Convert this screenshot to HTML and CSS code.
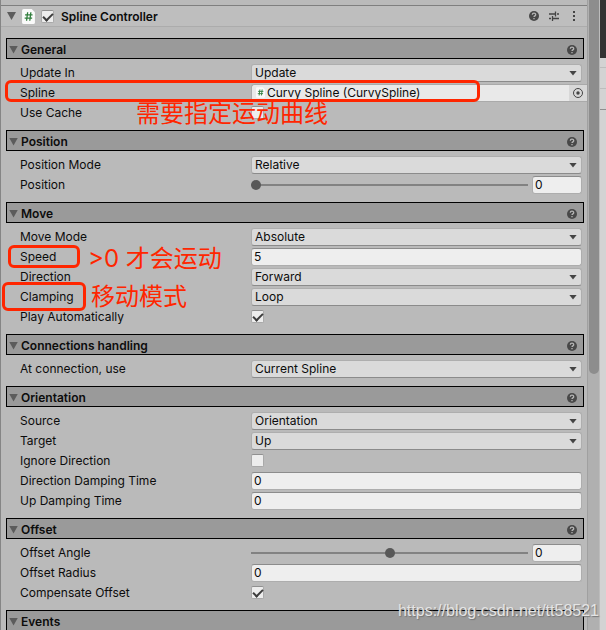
FILE: index.html
```html
<!DOCTYPE html>
<html lang="en">
<head>
<meta charset="utf-8">
<title>Spline Controller</title>
<link rel="stylesheet" href="styles.css">
</head>
<body>
<svg class="defs" aria-hidden="true">
  <symbol id="help" viewBox="0 0 12 12">
    <circle cx="6" cy="6" r="5" fill="#484848"/>
    <path d="M4.3 4.8C4.3 2.7 7.7 2.7 7.7 4.7C7.7 5.9 6 5.8 6 7.1M6 8V9.2" fill="none" stroke="#b4b4b4" stroke-width="1.3"/>
  </symbol>
  <symbol id="script" viewBox="0 0 12 14">
    <path d="M1.500 0H9L12 3V12.500Q12 14 10.500 14H1.500Q0 14 0 12.500V1.500Q0 0 1.500 0Z" fill="#fafafa"/>
    <path d="M5.200 3L4.200 11M8.200 3L7.200 11M2.800 5.500H9.800M2.400 8.500H9.400" stroke="#2f7d3b" stroke-width="1.200" fill="none"/>
  </symbol>
</svg>
<div class="window">
  <main class="inspector">
    <header class="component">
      <button class="fold" aria-label="Collapse component"></button>
      <svg class="script-icon"><use href="#script"/></svg>
      <input class="check" type="checkbox" id="enabled" checked>
      <label class="component-name" for="enabled">Spline Controller</label>
      <button class="icon-button" aria-label="Help"><svg><use href="#help"/></svg></button>
      <button class="icon-button" aria-label="Presets"><svg viewBox="0 0 12 12"><path d="M1 4H7M9 4H11M1 8.500H3M5 8.500H11M7.500 1.500V6.500M4.500 6V11" fill="none" stroke="#444" stroke-width="1.300"/></svg></button>
      <button class="icon-button" aria-label="More"><svg viewBox="0 0 12 12"><path d="M5 1H7V3H5ZM5 5H7V7H5ZM5 9H7V11H5Z" fill="#444"/></svg></button>
    </header>

    <section class="group">
      <h2 class="bar"><button class="fold" aria-label="Collapse General"></button>General<button class="icon-button" aria-label="Help on General"><svg><use href="#help"/></svg></button></h2>
      <div class="row"><label for="update">Update In</label><span class="drop"><select id="update"><option>Update</option></select></span></div>
      <div class="row"><label for="spline">Spline</label><span class="object"><svg class="object-icon"><use href="#script"/></svg><input id="spline" type="text" value="Curvy Spline (CurvySpline)" readonly><button class="picker" aria-label="Select spline"><svg viewBox="0 0 12 12"><circle cx="6" cy="6" r="4.500" fill="none" stroke="#444"/><circle cx="6" cy="6" r="1.700" fill="#444"/></svg></button></span></div>
      <div class="row"><label for="cache">Use Cache</label><input class="check" type="checkbox" id="cache"></div>
    </section>

    <section class="group">
      <h2 class="bar"><button class="fold" aria-label="Collapse Position"></button>Position<button class="icon-button" aria-label="Help on Position"><svg><use href="#help"/></svg></button></h2>
      <div class="row"><label for="pmode">Position Mode</label><span class="drop"><select id="pmode"><option>Relative</option></select></span></div>
      <div class="row"><label for="pos">Position</label><span class="slide"><input id="pos" type="range" min="0" max="1" step="0.01" value="0"><input class="field" type="text" value="0" aria-label="Position value"></span></div>
    </section>

    <section class="group">
      <h2 class="bar"><button class="fold" aria-label="Collapse Move"></button>Move<button class="icon-button" aria-label="Help on Move"><svg><use href="#help"/></svg></button></h2>
      <div class="row"><label for="mmode">Move Mode</label><span class="drop"><select id="mmode"><option>Absolute</option></select></span></div>
      <div class="row"><label for="speed">Speed</label><input class="field" id="speed" type="text" value="5"></div>
      <div class="row"><label for="dir">Direction</label><span class="drop"><select id="dir"><option>Forward</option></select></span></div>
      <div class="row"><label for="clamp">Clamping</label><span class="drop"><select id="clamp"><option>Loop</option></select></span></div>
      <div class="row"><label for="play">Play Automatically</label><input class="check" type="checkbox" id="play" checked></div>
    </section>

    <section class="group">
      <h2 class="bar"><button class="fold" aria-label="Collapse Connections handling"></button>Connections handling<button class="icon-button" aria-label="Help on Connections handling"><svg><use href="#help"/></svg></button></h2>
      <div class="row"><label for="conn">At connection, use</label><span class="drop"><select id="conn"><option>Current Spline</option></select></span></div>
    </section>

    <section class="group">
      <h2 class="bar"><button class="fold" aria-label="Collapse Orientation"></button>Orientation<button class="icon-button" aria-label="Help on Orientation"><svg><use href="#help"/></svg></button></h2>
      <div class="row"><label for="source">Source</label><span class="drop"><select id="source"><option>Orientation</option></select></span></div>
      <div class="row"><label for="target">Target</label><span class="drop"><select id="target"><option>Up</option></select></span></div>
      <div class="row"><label for="ignore">Ignore Direction</label><input class="check" type="checkbox" id="ignore"></div>
      <div class="row"><label for="ddamp">Direction Damping Time</label><input class="field" id="ddamp" type="text" value="0"></div>
      <div class="row"><label for="udamp">Up Damping Time</label><input class="field" id="udamp" type="text" value="0"></div>
    </section>

    <section class="group">
      <h2 class="bar"><button class="fold" aria-label="Collapse Offset"></button>Offset<button class="icon-button" aria-label="Help on Offset"><svg><use href="#help"/></svg></button></h2>
      <div class="row"><label for="angle">Offset Angle</label><span class="slide"><input id="angle" type="range" min="-180" max="180" value="0"><input class="field" type="text" value="0" aria-label="Offset angle value"></span></div>
      <div class="row"><label for="radius">Offset Radius</label><input class="field" id="radius" type="text" value="0"></div>
      <div class="row"><label for="comp">Compensate Offset</label><input class="check" type="checkbox" id="comp" checked></div>
    </section>

    <section class="group">
      <h2 class="bar"><button class="fold" aria-label="Collapse Events"></button>Events</h2>
    </section>
  </main>
  <div class="scrollbar"><div class="thumb"></div></div>
  <div class="side"><div class="side-dark"></div><div class="side-line"></div><div class="side-line"></div><div class="side-line side-line-strong"></div></div>

  <div class="mark mark-spline"></div>
  <div class="mark mark-speed"></div>
  <div class="mark mark-clamping"></div>
  <p class="note note-spline" lang="zh">需要指定运动曲线</p>
  <p class="note note-speed" lang="zh">&gt;0 才会运动</p>
  <p class="note note-clamping" lang="zh">移动模式</p>
  <p class="watermark">https://blog.csdn.net/tt58521</p>
</div>
</body>
</html>
```

FILE: styles.css
```css
* { box-sizing: border-box; }

body {
  margin: 0;
  color: #0c0c0c;
  font: 12px/18px Inter, "Liberation Sans", sans-serif;
}

button, input, select { font: inherit; color: inherit; margin: 0; }
button { border: 0; padding: 0; background: none; }
.defs { display: none; }

.window {
  position: relative;
  display: flex;
  height: 100vh;
  overflow: hidden;
  background: #bababa;
}

.inspector {
  flex: 1;
  min-width: 0;
  padding-top: 5px;
  border-left: 1px solid #858585;
}

.component {
  display: flex;
  align-items: center;
  height: 22px;
  margin-bottom: 11px;
  padding: 0 7px 0 6px;
  border-top: 1px solid #7f7f7f;
  border-bottom: 1px solid #acacac;
  background: #bebebe;
}

.component-name { flex: 1; margin-left: 7px; padding-top: 2px; font-weight: 600; }
.component .icon-button { margin-left: 8px; }
.script-icon { width: 13px; height: 15px; margin: 0 6px; }

.fold {
  width: 9px;
  height: 8px;
  background: #5c5c5c;
  clip-path: polygon(0 0, 100% 0, 50% 100%);
}

.icon-button, .icon-button svg { display: block; width: 12px; height: 12px; }

.group { margin-bottom: 9px; }

.bar {
  display: flex;
  align-items: center;
  height: 21px;
  margin: 0 3px 4px 5px;
  padding: 2px 5px 0 2px;
  border: 1px solid #000;
  background: #9a9a9a;
  font-size: 12px;
  font-weight: 600;
}
.bar .fold { margin-right: 3px; }
.bar .icon-button { margin-left: auto; }

.row {
  display: grid;
  grid-template-columns: 231px 1fr;
  align-items: center;
  height: 18px;
  margin: 0 5px 2px 19px;
}
.row label { padding-top: 1px; }

.drop { position: relative; display: block; }
.drop::after {
  content: "";
  position: absolute;
  top: 7px;
  right: 5px;
  width: 8px;
  height: 5px;
  background: #444;
  clip-path: polygon(0 0, 100% 0, 50% 100%);
}

select {
  display: block;
  appearance: none;
  width: 100%;
  height: 18px;
  padding: 0 3px 1px;
  border: 1px solid #aeaeae;
  border-bottom-color: #8b8b8b;
  border-radius: 3px;
  background: #dadada;
  line-height: 15px;
}

.field {
  width: 100%;
  height: 18px;
  padding: 0 2px;
  border: 1px solid #adadad;
  border-top-color: #8c8c8c;
  border-radius: 3px;
  background: #eee;
}

.check {
  appearance: none;
  width: 13px;
  height: 13px;
  border: 1px solid #a9a9a9;
  border-top-color: #909090;
  border-radius: 2px;
  background: #ededed;
}
.check:checked::before {
  content: "";
  display: block;
  width: 8px;
  height: 4px;
  margin: 2px 0 0 1px;
  border: solid #3c3c3c;
  border-width: 0 0 2px 2px;
  transform: rotate(-45deg);
}

.slide { display: grid; grid-template-columns: 1fr 50px; gap: 4px; align-items: center; }
.slide input[type="range"] {
  appearance: none;
  width: 100%;
  height: 18px;
  background: linear-gradient(#828282, #828282) center / 100% 2px no-repeat;
}
.slide input[type="range"]::-webkit-slider-thumb {
  appearance: none;
  width: 10px;
  height: 10px;
  border-radius: 50%;
  background: #585858;
}

.object {
  display: flex;
  align-items: center;
  height: 18px;
  margin-right: -5px;
  padding-left: 4px;
  border: 1px solid #aaa;
  border-width: 1px 0 1px 1px;
  border-radius: 3px 0 0 3px;
  background: #e9e9e9;
}
.object-icon { width: 9px; height: 11px; }
.object input {
  flex: 1;
  min-width: 0;
  height: 16px;
  padding: 0 2px;
  border: 0;
  background: none;
}
.picker { width: 18px; height: 16px; background: #d8d8d8; }
.picker svg { display: block; width: 12px; height: 12px; margin: 0 auto; }

.scrollbar {
  width: 13px;
  padding-left: 1px;
  border-left: 1px solid #a0a0a0;
  border-right: 1px solid #bcbcbc;
  background: #b0b0b0;
}
.thumb { width: 10px; height: 374px; border-radius: 0 0 5px 5px; background: #8d8d8d; }

.side { width: 6px; background: #d3d3d3; }
.side-dark { height: 58px; background: #333; }
.side-line { height: 10px; border-bottom: 1px solid #bdbdbd; }
.side-line + .side-line { height: 21px; }
.side-line-strong { border-color: #8f8f8f; }

.mark { position: absolute; border: 3px solid #ff2600; border-radius: 6px; }
.mark-spline { left: 5px; top: 80px; width: 475px; height: 22px; }
.mark-speed { left: 8px; top: 245px; width: 72px; height: 23px; }
.mark-clamping { left: 2px; top: 282px; width: 84px; height: 29px; }

.note {
  position: absolute;
  margin: 0;
  color: #ff2600;
  font: 24px/24px "Noto Sans CJK SC", sans-serif;
  white-space: nowrap;
}
.note-spline { left: 136px; top: 100px; }
.note-speed { left: 88px; top: 247px; font-family: Inter, "Noto Sans CJK SC", sans-serif; }
.note-clamping { left: 91px; top: 283px; }

.watermark {
  position: absolute;
  right: 7px;
  bottom: 9px;
  margin: 0;
  color: #e4e4e4;
  font: 16px/20px "Liberation Sans", sans-serif;
  text-shadow: 1px 1px 1px #777;
}
```
